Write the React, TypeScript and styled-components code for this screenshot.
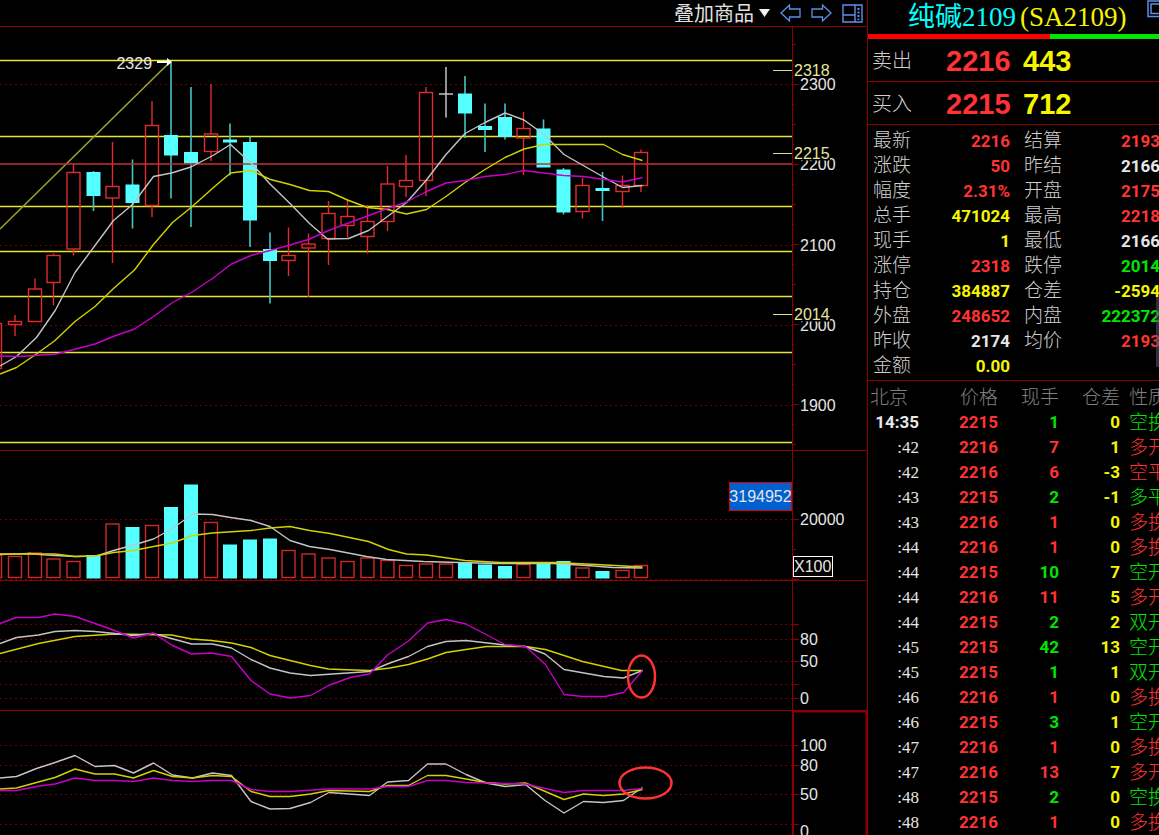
import React from "react";
import styled, { createGlobalStyle } from "styled-components";

const C = {
  frame: "#8e0000",
  grid: "#6a0000",
  red: "#ff3333",
  green: "#00e600",
  yellow: "#f5f500",
  white: "#e6e6e6",
  label: "#d0d0d0",
  cyan: "#55ffff",
  magenta: "#c800c8",
  blue: "#5f8fe6",
};

const sans = `"Liberation Sans", "Noto Sans CJK SC", sans-serif`;
const digits = `Roboto, "Noto Sans CJK SC", sans-serif`;
const serif = `"Liberation Serif", "Noto Sans CJK SC", serif`;

const GlobalStyle = createGlobalStyle`
  * { box-sizing: border-box; }
  body { margin: 0; background: #000; color: ${C.white}; font-family: ${sans}; }
`;

const Page = styled.div`
  display: grid;
  grid-template-columns: minmax(0, 1fr) 292px;
  min-height: 100vh;
  overflow: hidden;
`;

/* ---------- chart side ---------- */

const ChartSide = styled.main`
  display: flex;
  flex-direction: column;
  min-width: 0;
`;

const Toolbar = styled.header`
  display: flex;
  align-items: center;
  justify-content: flex-end;
  gap: 10px;
  height: 27px;
  padding-right: 4px;
  border-bottom: 1px solid ${C.frame};
`;

const ToolButton = styled.button`
  display: flex;
  align-items: center;
  gap: 5px;
  padding: 0;
  border: 0;
  background: none;
  color: #e0e0e0;
  font: 20px/26px ${sans};
  cursor: pointer;
`;

const ToolText = styled.span`
  padding-top: 2px;
  line-height: 24px;
`;

const Panel = styled.section<{ $last?: boolean }>`
  display: grid;
  grid-template-columns: minmax(0, 1fr) 75px;
  border-bottom: ${(p) => (p.$last ? "0" : `1px solid ${C.frame}`)};
`;

const PlotArea = styled.div`
  position: relative;
  min-width: 0;
`;

const Plot = styled.svg<{ $h: number }>`
  display: block;
  width: 100%;
  height: ${(p) => p.$h}px;
`;

const Axis = styled.svg<{ $h: number }>`
  display: block;
  width: 75px;
  height: ${(p) => p.$h}px;
  font: 16px ${sans};
  fill: ${C.white};
`;

const PeakLabel = styled.span`
  position: absolute;
  top: 28px;
  left: 0;
  width: 19.2%;
  text-align: right;
  font-size: 16px;
  line-height: 18px;
`;

const VolumeBadge = styled.span`
  position: absolute;
  top: 31px;
  right: 0;
  width: 63px;
  border: 1px solid #e00000;
  background: #0060d0;
  font-size: 16px;
  line-height: 27px;
  white-space: nowrap;
  display: flex;
  justify-content: center;
`;

/* ---------- quote side ---------- */

const QuoteSide = styled.aside`
  position: relative;
  border-left: 1px solid ${C.frame};
  overflow: hidden;
  min-width: 0;
`;

const TitleBar = styled.div`
  position: relative;
  display: flex;
  align-items: center;
  height: 34px;
  padding-left: 40px;
`;

const Title = styled.h1`
  display: flex;
  gap: 4px;
  margin: 0;
  font: 27px/34px ${serif};
  white-space: nowrap;
  color: #00ffff;
`;

const Code = styled.span`
  color: ${C.yellow};
`;

const WindowButton = styled.button`
  position: absolute;
  top: 0;
  right: -8px;
  padding: 0;
  border: 0;
  background: none;
  display: flex;
`;

const RatioBar = styled.div`
  display: flex;
  height: 5px;
`;

const RatioPart = styled.div<{ $color: string; $share: number }>`
  flex: ${(p) => p.$share};
  background: ${(p) => p.$color};
`;

const BookRow = styled.div`
  display: flex;
  align-items: center;
  height: 43px;
  padding: 3px 0 0 4px;
  border-bottom: 1px solid ${C.frame};
  font: bold 29px/39px ${sans};
`;

const BookLabel = styled.span`
  width: 74px;
  color: ${C.label};
  font-size: 20px;
  font-weight: 300;
`;

const BookPrice = styled.span`
  width: 77px;
  color: ${C.red};
`;

const BookSize = styled.span`
  color: ${C.yellow};
`;

const Quotes = styled.dl`
  display: grid;
  grid-template-columns: 137px 136px;
  column-gap: 14px;
  margin: 0;
  padding: 3px 0 2px 5px;
  border-bottom: 1px solid ${C.frame};
`;

const Quote = styled.div`
  display: flex;
  justify-content: space-between;
  height: 25px;
`;

const QuoteLabel = styled.dt`
  color: ${C.label};
  font: 300 19px/25px ${sans};
`;

const QuoteValue = styled.dd<{ $color: string }>`
  margin: 0;
  color: ${(p) => p.$color};
  font: bold 17px/27px ${digits};
`;

const ScrollThumb = styled.div`
  position: absolute;
  top: 297px;
  right: 0;
  width: 3px;
  height: 70px;
  background: rgba(80, 80, 110, 0.6);
`;

const Ticks = styled.table`
  width: 304px;
  margin-top: 4px;
  table-layout: fixed;
  border-collapse: collapse;
`;

const Head = styled.th<{ $left?: number }>`
  height: 25px;
  padding: 0 0 0 ${(p) => p.$left ?? 0}px;
  color: #808080;
  font: 300 19px/25px ${sans};
  text-align: ${(p) => (p.$left ? "left" : "right")};
  white-space: nowrap;
`;

const Cell = styled.td<{ $color: string }>`
  height: 25px;
  padding: 0;
  color: ${(p) => p.$color};
  font: bold 17px/25px ${digits};
  text-align: right;
`;

const SecondsCell = styled(Cell)`
  font: 17px/25px ${serif};
`;

const KindCell = styled(Cell)`
  padding-left: 9px;
  font: 300 19px/25px ${sans};
  text-align: left;
  white-space: nowrap;
`;

/* ---------- data ---------- */

type Kind = "up" | "down" | "flat";
// x, kind, high, body top, body bottom, low, volume top
const candles: [number, Kind, number, number, number, number, number][] = [
  [-5, "up", 323, 323.5, 368.5, 369, 555],
  [15, "up", 315, 321.5, 324.5, 336, 556.5],
  [35, "up", 278.5, 289, 321.5, 322, 553],
  [53.5, "up", 253.5, 255.5, 282.5, 305.5, 559],
  [73.5, "up", 164, 172.5, 249, 255.5, 561.5],
  [93.5, "down", 171, 172, 196, 211, 555],
  [112.5, "up", 142, 186.5, 198, 263, 524],
  [132.5, "down", 159.5, 184.5, 203, 228.5, 527],
  [152, "up", 101, 125.5, 205.5, 217, 525.5],
  [171, "down", 62, 135, 155.5, 198.5, 507],
  [191, "down", 87, 152, 163.5, 227, 484.5],
  [211, "up", 84, 134, 151.5, 161, 522.5],
  [230, "down", 123.5, 139.5, 142.5, 175.5, 544.5],
  [250, "down", 136.5, 142, 220.5, 247, 539.5],
  [270, "down", 232.5, 249, 261, 303.5, 538.5],
  [288.5, "up", 227.5, 255.5, 260.5, 276, 550.5],
  [308.5, "up", 233.5, 244, 248, 297, 554],
  [328.5, "up", 201, 213.5, 238.5, 265, 558],
  [347.5, "up", 200, 216.5, 225.5, 237.5, 561.5],
  [367.5, "up", 205, 221.5, 236.5, 253.5, 558],
  [387.5, "up", 166, 184, 221.5, 231, 560.5],
  [406, "up", 155, 180.5, 186.5, 197, 565.5],
  [426, "up", 87, 92.5, 180.5, 196, 564],
  [446, "flat", 67, 93.5, 94.5, 117.5, 564],
  [465, "down", 76, 93.5, 113.5, 138, 562.5],
  [485, "down", 103.5, 126, 130, 152, 564.5],
  [505, "down", 103.5, 117, 137, 139.5, 566],
  [523.5, "up", 112, 128.5, 138, 175, 564.5],
  [543.5, "down", 119.5, 128.5, 167.5, 167, 563.5],
  [563.5, "down", 168, 169.5, 212.5, 214.5, 561],
  [582.5, "up", 178, 185.5, 211.5, 218.5, 568],
  [602.5, "down", 172, 188, 191, 221, 571],
  [622.5, "up", 175.5, 185.5, 191.5, 208, 570.5],
  [641, "up", 149.5, 152.5, 185.5, 192, 565.5],
];

const priceLines = {
  white:
    "0,366 16.5,356.5 36.5,337.5 55.5,310 75,272.5 113.5,220.5 132.5,204.5 153.5,176.5 171.5,173 191,167 213,155.5 230.5,144.5 253,165 270.5,184.5 290,203.5 309.5,223.5 327.5,239 348.5,238.5 368.5,230.5 406.5,202.5 426,180.5 446,154.5 465,133.5 485,122.5 505,113 524,120 544,134.5 564,154.5 602.5,176.5 622.5,187.5 642.5,185.5",
  yellow:
    "0,374 16.5,367.5 36.5,354 55,340.5 75,321.5 95,306.5 113.5,288.5 134.5,270 153.5,244.5 172.5,222.5 191,207.5 213.5,187.5 230.5,173 251,170.5 270.5,179.5 290,184.5 309.5,190.5 328.5,191.5 347.5,200 367.5,207.5 387.5,209.5 406.5,214 426.5,209.5 446,196.5 465,182.5 485,169.5 505,157.5 524,149 544,144.5 603.5,144.5 622.5,154.5 642.5,160.5",
  magenta:
    "0,356 20,356.5 56.5,354 95,344 114.5,336 134.5,329 153.5,316.5 172.5,302.5 191.5,292.5 212.5,278.5 231.5,264 251,255.5 270,250.5 290,245 308.5,239.5 328.5,230.5 348.5,223 367.5,216 387.5,208.5 406.5,202 426.5,191.5 446,183 465,180.5 485,176.5 505,174.5 524,170.5 563.5,175.5 583.5,176.5 622.5,182 642.5,177.5",
};

const volumeLines = {
  white:
    "0,554.5 30,553.5 40,554.5 55,555.5 75,556.5 96.5,556 113.5,550.5 133.5,545 153.5,539 172.5,528.5 192.5,514 212.5,514.5 230.5,517.5 251,520.5 270,526.5 290,540.5 309.5,546.5 330,549.5 366.5,556.5 386.5,559.5 423.5,561.5 458.5,562.5 496.5,563.5 553,563.5 586.5,565.5 613,567.5 642.5,568",
  yellow:
    "0,554 55,554 75,556.5 95,556 113.5,552.5 133.5,550.5 153.5,546.5 172.5,543 192.5,535.5 212.5,533 251,530.5 270,528 290,526.5 309.5,530.5 330,533.5 368.5,541.5 388.5,549.5 406.5,554 426.5,555 465,560.5 500,562.5 553.5,562.5 596.5,564.5 642.5,567",
};

const kdjLines = {
  yellow:
    "0,653.5 38.5,643.5 75,636.5 115,634 171.5,635 191.5,639 211.5,640.5 231.5,643 251,647.5 270,655.5 310.5,665.5 328.5,669 340,669.5 369.5,670.5 390,668 408.5,664.5 427.5,659 446,652.5 466,649.5 486.5,646.5 525.5,646.5 545.5,649.5 582.5,661.5 621.5,670.5 642.5,670.5",
  white:
    "0,643.5 16.5,637.5 38.5,635 55,631.5 75,630.5 95,631.5 115,633.5 133,635.5 153,633.5 171.5,638.5 191.5,644 212.5,644 231.5,648 251,659.5 270,668 290,673 310.5,675.5 340,673.5 369.5,671.5 388.5,663.5 408.5,656.5 427.5,646.5 446,641.5 466,640.5 505,645 525.5,646.5 545,654 564,669.5 604,676.5 623.5,678 642.5,670.5",
  magenta:
    "0,623.5 16,617.5 38.5,617.5 55,614 75,616.5 95,623.5 114.5,630.5 133.5,638 153.5,633 171.5,645 191.5,654 211.5,653 231.5,656.5 251,680.5 270,694 290,698 310.5,695.5 328.5,685.5 350,677.5 369.5,674 387.5,655 408.5,641 427.5,623 446,619.5 466,624 505,644.5 525.5,646.5 545.5,664.5 564,694.5 582.5,696.5 605,696.5 623.5,692.5 642.5,670.5",
};

const rsiLines = {
  white:
    "0,778 16.5,776.5 36.5,768.5 55,762.5 75,755.5 95,766.5 114.5,765.5 133.5,773 153.5,763 172.5,775 192.5,778 212.5,773 231.5,775.5 251,801.5 270,809 290,808.5 310.5,802.5 329,792.5 369.5,795.5 387.5,782 408.5,780.5 427.5,764 446,764 466,774.5 486,783 505,786.5 525.5,784.5 545,800.5 564,813 583.5,801.5 603.5,802.5 623.5,800.5 642.5,787.5",
  yellow:
    "0,789 16.5,788 36.5,782.5 55,777.5 75,769 95,774 114.5,774 133.5,778 153.5,770.5 172.5,776.5 192.5,778 212.5,775.5 231.5,776.5 251,791.5 270,796.5 290,796.5 310.5,794 329,790.5 369.5,791.5 387.5,785.5 408.5,785.5 427.5,775.5 446,775.5 486,782.5 505,784 525.5,783 564,799.5 583.5,794 603.5,795.5 623.5,794 642.5,789.5",
  magenta:
    "0,790.5 16.5,790.5 36.5,786.5 55,784 75,778 95,780.5 114,780.5 133.5,781.5 153.5,778 172.5,780.5 192.5,781.5 212.5,780.5 231.5,780.5 251,789.5 270,791.5 290,791.5 328.5,789 369.5,789 387.5,786.5 408.5,786.5 427.5,780.5 446,780.5 466,782.5 525.5,784 545,788.5 564,792.5 583.5,790.5 623.5,790.5 642.5,788.5",
};

const lineColors: Record<string, string> = {
  white: "#c4c4c4",
  yellow: "#d2d200",
  magenta: C.magenta,
};

const quotes: [string, string, string][] = [
  ["最新", "2216", C.red],
  ["结算", "2193", C.red],
  ["涨跌", "50", C.red],
  ["昨结", "2166", C.white],
  ["幅度", "2.31%", C.red],
  ["开盘", "2175", C.red],
  ["总手", "471024", C.yellow],
  ["最高", "2218", C.red],
  ["现手", "1", C.yellow],
  ["最低", "2166", C.white],
  ["涨停", "2318", C.red],
  ["跌停", "2014", C.green],
  ["持仓", "384887", C.yellow],
  ["仓差", "-2594", C.yellow],
  ["外盘", "248652", C.red],
  ["内盘", "222372", C.green],
  ["昨收", "2174", C.white],
  ["均价", "2193", C.red],
  ["金额", "0.00", C.yellow],
];

// time, price, size, open interest change, kind, kind/size colour
const ticks: [string, number, number, number, string, string][] = [
  ["14:35", 2215, 1, 0, "空换", C.green],
  [":42", 2216, 7, 1, "多开", C.red],
  [":42", 2216, 6, -3, "空平", C.red],
  [":43", 2215, 2, -1, "多平", C.green],
  [":43", 2216, 1, 0, "多换", C.red],
  [":44", 2216, 1, 0, "多换", C.red],
  [":44", 2215, 10, 7, "空开", C.green],
  [":44", 2216, 11, 5, "多开", C.red],
  [":44", 2215, 2, 2, "双开", C.green],
  [":45", 2215, 42, 13, "空开", C.green],
  [":45", 2215, 1, 1, "双开", C.green],
  [":46", 2216, 1, 0, "多换", C.red],
  [":46", 2215, 3, 1, "空开", C.green],
  [":47", 2216, 1, 0, "多换", C.red],
  [":47", 2216, 13, 7, "多开", C.red],
  [":48", 2215, 2, 0, "空换", C.green],
  [":48", 2216, 1, 0, "多换", C.red],
];

/* ---------- chart parts ---------- */

function GridLines({ at }: { at: number[] }) {
  return (
    <g stroke={C.grid} strokeDasharray="2 3">
      {at.map((y) => (
        <line key={y} x1={0} x2={792} y1={y} y2={y} />
      ))}
    </g>
  );
}

function Lines({ set }: { set: Record<string, string> }) {
  return (
    <g fill="none" strokeWidth={1.4} strokeLinejoin="round">
      {Object.entries(set).map(([name, points]) => (
        <polyline key={name} points={points} stroke={lineColors[name]} />
      ))}
    </g>
  );
}

function Candle({ c }: { c: (typeof candles)[number] }) {
  const [x, kind, high, top, bottom, low] = c;
  if (kind === "down")
    return (
      <g>
        <line x1={x} x2={x} y1={high} y2={low} stroke="#45c4c4" strokeWidth={1.6} />
        <rect x={x - 7} y={top} width={14} height={bottom - top} fill={C.cyan} />
      </g>
    );
  if (kind === "flat")
    return (
      <path d={`M${x} ${high}V${low}M${x - 7} ${top + 0.5}h14`} stroke="#c4c4c4" strokeWidth={1.5} />
    );
  return (
    <g stroke="#e02c2c" strokeWidth={1.4} fill="none">
      <path d={`M${x} ${high}V${top}M${x} ${bottom}V${low}`} />
      <rect x={x - 6.5} y={top} width={13} height={bottom - top} />
    </g>
  );
}

function VolumeBar({ c }: { c: (typeof candles)[number] }) {
  const [x, kind, , , , , top] = c;
  return kind === "down" ? (
    <rect x={x - 7} y={top} width={14} height={578.5 - top} fill={C.cyan} />
  ) : (
    <rect x={x - 6.5} y={top} width={13} height={577.5 - top} fill="none" stroke="#d02828" strokeWidth={1.4} />
  );
}

function AxisFrame({ top, height, ticks: at }: { top: number; height: number; ticks: [number, number][] }) {
  return (
    <g stroke={C.frame}>
      <line x1={0.5} x2={0.5} y1={top} y2={top + height} />
      {at.map(([y, len]) => (
        <line key={y} x1={0} x2={len} y1={y} y2={y} />
      ))}
    </g>
  );
}

function AxisLabels({ items }: { items: [string, number][] }) {
  return (
    <>
      {items.map(([text, y]) => (
        <text key={text} x={8} y={y}>
          {text}
        </text>
      ))}
    </>
  );
}

const priceTicks: [number, number][] = Array.from({ length: 21 }, (_, i) => {
  const y = 44.5 + i * 20;
  return [y, i % 4 === 2 ? 7 : i % 2 ? 2 : 4];
});

const limitMarks: [string, number][] = [
  ["2318", 70.5],
  ["2215", 153.5],
  ["2014", 314.5],
];

export default function App() {
  return (
    <>
      <GlobalStyle />
      <Page>
        <ChartSide>
          <Toolbar>
            <ToolButton type="button">
              <ToolText>叠加商品</ToolText>
              <svg width="11" height="8" viewBox="0 0 11 8" aria-hidden="true">
                <path d="M0 0H11L5.5 8Z" fill="#f0f0f0" />
              </svg>
            </ToolButton>
            <ToolButton type="button" aria-label="后退">
              <svg width="21" height="18" viewBox="0 0 21 18" fill="none" stroke={C.blue} strokeWidth="1.3">
                <path d="M1 9L9.5 1V5H20V13H9.5V17Z" />
              </svg>
            </ToolButton>
            <ToolButton type="button" aria-label="前进">
              <svg width="21" height="18" viewBox="0 0 21 18" fill="none" stroke={C.blue} strokeWidth="1.3">
                <path d="M20 9L11.5 1V5H1V13H11.5V17Z" />
              </svg>
            </ToolButton>
            <ToolButton type="button" aria-label="布局">
              <svg width="21" height="19" viewBox="0 0 21 19" fill="none" stroke={C.blue} strokeWidth="1.4">
                <path d="M1 1H20V18H1ZM13 1V18M1 11H13" />
                <path d="M16.500 4V16" strokeWidth="2" strokeDasharray="2 1.500" />
              </svg>
            </ToolButton>
          </Toolbar>

          <Panel aria-label="K线">
            <PlotArea>
              <Plot $h={423} viewBox="0 27 792 423" preserveAspectRatio="none">
                <GridLines at={[84.5, 245.5, 325.5, 405.5]} />
                <g stroke="#e6e632" strokeWidth={1.3}>
                  {[60.5, 136.5, 206.5, 251.5, 296.5, 352.5, 442.5].map((y) => (
                    <line key={y} x1={0} x2={792} y1={y} y2={y} />
                  ))}
                </g>
                <line x1={0} x2={170} y1={229} y2={62} stroke="#a0a02c" strokeWidth={1.6} />
                {candles.map((c) => (
                  <Candle key={c[0]} c={c} />
                ))}
                <line x1={0} x2={792} y1={164} y2={164} stroke="#c83030" strokeWidth={1.6} />
                <Lines set={priceLines} />
                <path d="M157 62H168" stroke="#fff" strokeWidth={2} />
                <path d="M167 58L172 62L167 66Z" fill="#fff" />
                <line x1={773} x2={792} y1={70.5} y2={70.5} stroke="#e0e080" />
                <line x1={773} x2={792} y1={153.5} y2={153.5} stroke="#e0e080" />
                <line x1={773} x2={792} y1={314.5} y2={314.5} stroke="#e0e080" />
              </Plot>
              <PeakLabel>2329</PeakLabel>
            </PlotArea>
            <Axis $h={423} viewBox="0 27 75 423">
              <AxisFrame top={27} height={423} ticks={priceTicks} />
              <AxisLabels
                items={[
                  ["2300", 90],
                  ["2200", 170],
                  ["2100", 251],
                  ["2000", 331],
                  ["1900", 411],
                ]}
              />
              {limitMarks.map(([text, y]) => (
                <g key={text}>
                  <rect x={2} y={y - 8} width={36} height={15} fill="#000" />
                  <text x={2} y={y + 5.5} fill="#e6e6a0">
                    {text}
                  </text>
                </g>
              ))}
            </Axis>
          </Panel>

          <Panel aria-label="成交量">
            <PlotArea>
              <Plot $h={129} viewBox="0 451 792 129" preserveAspectRatio="none">
                <GridLines at={[519.5, 579.5]} />
                {candles.map((c) => (
                  <VolumeBar key={c[0]} c={c} />
                ))}
                <Lines set={volumeLines} />
              </Plot>
              <VolumeBadge>3194952</VolumeBadge>
            </PlotArea>
            <Axis $h={129} viewBox="0 451 75 129">
              <AxisFrame
                top={451}
                height={129}
                ticks={[
                  [519.5, 7],
                  [534.5, 2],
                  [549.5, 4],
                  [579.5, 7],
                ]}
              />
              <AxisLabels items={[["20000", 525]]} />
              <rect x={1.5} y={556.5} width={39} height={20} fill="#000" stroke="#fff" />
              <text x={2} y={572}>
                X100
              </text>
            </Axis>
          </Panel>

          <Panel aria-label="KDJ">
            <PlotArea>
              <Plot $h={129} viewBox="0 581 792 129" preserveAspectRatio="none">
                <GridLines at={[624.5, 639.5, 661.5, 684.5, 698.5]} />
                <Lines set={kdjLines} />
                <ellipse cx={641.5} cy={676.5} rx={13.5} ry={21} fill="none" stroke={C.red} strokeWidth={2.5} />
              </Plot>
            </PlotArea>
            <Axis $h={129} viewBox="0 581 75 129">
              <AxisFrame
                top={581}
                height={129}
                ticks={[
                  [624.5, 7],
                  [639.5, 7],
                  [661.5, 7],
                  [684.5, 7],
                  [698.5, 7],
                ]}
              />
              <AxisLabels
                items={[
                  ["80", 645],
                  ["50", 667],
                  ["0", 704],
                ]}
              />
            </Axis>
          </Panel>

          <Panel $last aria-label="RSI">
            <PlotArea>
              <Plot $h={124} viewBox="0 711 792 124" preserveAspectRatio="none">
                <GridLines at={[745.5, 765.5, 794.5, 824.5]} />
                <Lines set={rsiLines} />
                <ellipse cx={645.5} cy={783} rx={26} ry={15.5} fill="none" stroke={C.red} strokeWidth={2.5} />
              </Plot>
            </PlotArea>
            <Axis $h={124} viewBox="0 711 75 124">
              <AxisFrame
                top={711}
                height={124}
                ticks={[
                  [745.5, 7],
                  [765.5, 7],
                  [794.5, 7],
                  [824.5, 7],
                ]}
              />
              <path d="M1 835V711.500H74.500V835" fill="none" stroke={C.frame} strokeWidth={2} />
              <AxisLabels
                items={[
                  ["100", 751],
                  ["80", 771],
                  ["50", 800],
                  ["0", 837],
                ]}
              />
            </Axis>
          </Panel>
        </ChartSide>

        <QuoteSide>
          <TitleBar>
            <Title>
              纯碱2109<Code>(SA2109)</Code>
            </Title>
            <WindowButton type="button" aria-label="窗口">
              <svg width="20" height="18" viewBox="0 0 20 18" fill="none" stroke={C.blue} strokeWidth="1.5">
                <path d="M1 1H19V16.500H1ZM4 4H16V13.500H4Z" />
              </svg>
            </WindowButton>
          </TitleBar>
          <RatioBar>
            <RatioPart $color="#ff0000" $share={182} />
            <RatioPart $color={C.green} $share={109} />
          </RatioBar>
          <BookRow>
            <BookLabel>卖出</BookLabel>
            <BookPrice>2216</BookPrice>
            <BookSize>443</BookSize>
          </BookRow>
          <BookRow>
            <BookLabel>买入</BookLabel>
            <BookPrice>2215</BookPrice>
            <BookSize>712</BookSize>
          </BookRow>
          <Quotes>
            {quotes.map(([label, value, color]) => (
              <Quote key={label + value}>
                <QuoteLabel>{label}</QuoteLabel>
                <QuoteValue $color={color}>{value}</QuoteValue>
              </Quote>
            ))}
          </Quotes>
          <Ticks>
            <colgroup>
              <col style={{ width: 51 }} />
              <col style={{ width: 79 }} />
              <col style={{ width: 61 }} />
              <col style={{ width: 61 }} />
              <col />
            </colgroup>
            <thead>
              <tr>
                <Head $left={2}>北京</Head>
                <Head>价格</Head>
                <Head>现手</Head>
                <Head>仓差</Head>
                <Head $left={9}>性质</Head>
              </tr>
            </thead>
            <tbody>
              {ticks.map(([time, price, size, change, kind, color], i) => (
                <tr key={i}>
                  {time.startsWith(":") ? (
                    <SecondsCell $color={C.white}>{time}</SecondsCell>
                  ) : (
                    <Cell $color={C.white}>{time}</Cell>
                  )}
                  <Cell $color={C.red}>{price}</Cell>
                  <Cell $color={color}>{size}</Cell>
                  <Cell $color={C.yellow}>{change}</Cell>
                  <KindCell $color={color}>{kind}</KindCell>
                </tr>
              ))}
            </tbody>
          </Ticks>
          <ScrollThumb />
        </QuoteSide>
      </Page>
    </>
  );
}
